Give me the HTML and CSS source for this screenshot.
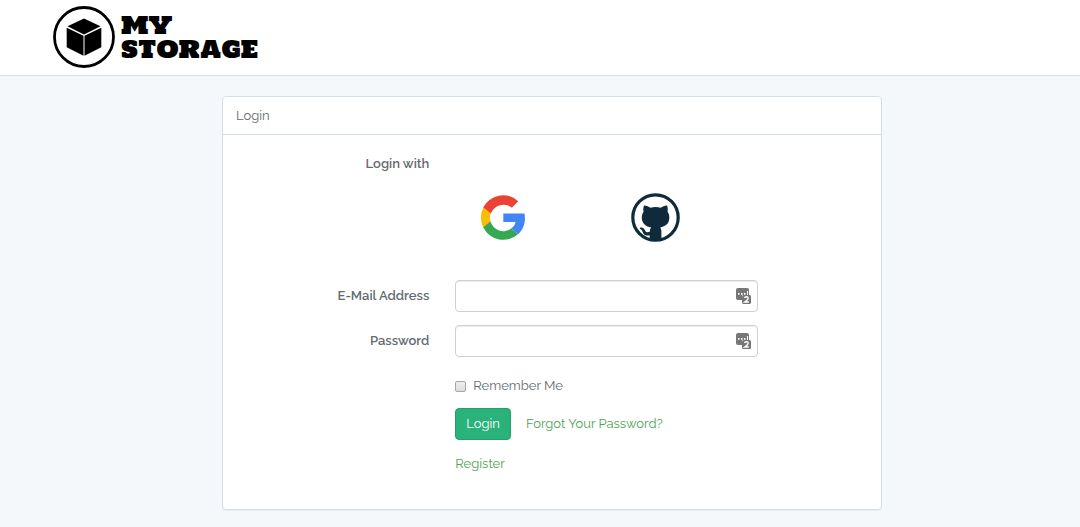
FILE: index.html
```html
<!DOCTYPE html>
<html lang="en">
<head>
<meta charset="utf-8">
<meta name="viewport" content="width=device-width, initial-scale=1">
<title>My Storage - Login</title>
<link rel="stylesheet" href="styles.css">
</head>
<body>
<header class="navbar">
  <a class="brand" href="#">
    <svg class="brand-mark" viewBox="0 0 62 62" aria-hidden="true">
      <circle cx="31" cy="31" r="29.5" fill="#fff" stroke="#000" stroke-width="2.8"/>
      <path d="M31 12.5 47.5 20.3 31 28.4 14.5 20.3Z"/>
      <path d="M13.7 21.8 30.5 29.8V49.7L13.7 41.2Z"/>
      <path d="M48.3 21.8 31.5 29.8V49.7L48.3 41.2Z"/>
    </svg>
    <span class="brand-name">MY<br>STORAGE</span>
  </a>
</header>
<main class="content">
<section class="panel">
  <h1 class="panel-heading">Login</h1>
  <form class="panel-body">
    <div class="row">
      <span class="label">Login with</span>
    </div>
    <div class="row social-row">
      <div class="field social">
        <a href="#" aria-label="Google">
          <svg class="social-icon" viewBox="0 0 49 49">
            <path fill="#ea4335" d="M3.7 15.5A22.2 22.2 0 0 1 39.3 8.3L32.8 14.7A13.3 13.3 0 0 0 11.8 20.8Z"/>
            <path fill="#fbbc05" d="M4.5 14.2A22.2 22.2 0 0 0 4.5 34.8L11.7 29.1A13.5 13.5 0 0 1 11.7 20.2Z"/>
            <path fill="#34a853" d="M4.2 34.3A22.3 22.3 0 0 0 39.2 41.1L32.1 35.5A13.2 13.2 0 0 1 11.5 28.6Z"/>
            <path fill="#4285f4" d="M24.3 20.4H45.5C47.1 29 44.4 36.7 39.2 41.1L32.1 35.5C34.5 34 36 31.8 36.6 29.1H24.3Z"/>
          </svg>
        </a>
        <a href="#" aria-label="GitHub">
          <svg class="social-icon" viewBox="0 0 49 49">
            <circle cx="24.5" cy="24.5" r="22.7" fill="#fff" stroke="#0f2a3a" stroke-width="3.2"/>
            <path fill="#0f2a3a" d="M13 12.4C15.4 12.3 17.8 13.4 19.4 14.7C22.8 13.9 26.3 13.9 29.7 14.7C31.5 13.3 33.8 12.3 36 12.4C37 14.7 36.9 16.9 36.5 18.7C38 20.6 38.5 22.7 38.3 25C38 31.1 34.5 33.4 29.1 34.4C30 35.5 30.4 36.7 30.4 38.2V47H18.7V42.4C14.7 43 12.8 41.9 11.8 39.2C11.2 37.4 10.3 36.3 8.8 35.7C8.6 34.7 9.6 34.3 10.8 34.6C12.6 35.1 13.4 36.4 14.2 37.7C15.2 39.3 16.8 39.6 18.8 38.7C18.9 36.8 19.3 35.4 20.2 34.4C14.8 33.5 11.1 31 10.8 25C10.7 22.7 11.2 20.6 12.6 18.8C12.1 16.8 12.1 14.6 13 12.4Z"/>
          </svg>
        </a>
      </div>
    </div>
    <div class="row">
      <label class="label" for="email">E-Mail Address</label>
      <div class="field input-wrap">
        <input class="input" id="email" type="email">
        <svg class="key-icon" viewBox="0 0 15 17" aria-hidden="true">
          <path fill="#777" d="M2 0H11Q13 0 13 2V7H6V12H2Q0 12 0 10V2Q0 0 2 0Z"/>
          <path fill="#fff" d="M2 5h1.5v1.7H2zM5 5h1.5v1.7H5zM8 5h1.5v1.7H8zM11 3h1v4h-1z"/>
          <rect x="6" y="7" width="9" height="9" rx="1.5" fill="#777"/>
          <path fill="none" stroke="#fff" stroke-width="1.4" d="M8.3 9.7Q10.3 8.1 12 9.3Q13 10.8 8.7 14H12.8"/>
        </svg>
      </div>
    </div>
    <div class="row">
      <label class="label" for="password">Password</label>
      <div class="field input-wrap">
        <input class="input" id="password" type="password">
        <svg class="key-icon" viewBox="0 0 15 17" aria-hidden="true">
          <path fill="#777" d="M2 0H11Q13 0 13 2V7H6V12H2Q0 12 0 10V2Q0 0 2 0Z"/>
          <path fill="#fff" d="M2 5h1.5v1.7H2zM5 5h1.5v1.7H5zM8 5h1.5v1.7H8zM11 3h1v4h-1z"/>
          <rect x="6" y="7" width="9" height="9" rx="1.5" fill="#777"/>
          <path fill="none" stroke="#fff" stroke-width="1.4" d="M8.3 9.7Q10.3 8.1 12 9.3Q13 10.8 8.7 14H12.8"/>
        </svg>
      </div>
    </div>
    <div class="row remember-row">
      <div class="field remember">
        <input class="checkbox" id="remember" type="checkbox">
        <label for="remember">Remember Me</label>
      </div>
    </div>
    <div class="row">
      <div class="field actions">
        <button class="button" type="submit">Login</button>
        <a class="link" href="#">Forgot Your Password?</a>
      </div>
    </div>
    <div class="row">
      <div class="field"><a class="link" href="#">Register</a></div>
    </div>
  </form>
</section>
</main>
</body>
</html>
```
FILE: styles.css
```css
* { box-sizing: border-box; }

body {
  margin: 0;
  background: #f5f8fa;
  color: #636b6f;
  font-family: Raleway, Lato, sans-serif;
  font-size: 13px;
  line-height: 22px;
}

.navbar {
  background: #fff;
  border-bottom: 1px solid #d3e0e9;
  padding: 6px 53px 7px;
}

.brand {
  display: inline-flex;
  align-items: center;
  gap: 6px;
  color: #000;
  text-decoration: none;
  vertical-align: top;
}

.brand-mark { width: 62px; height: 62px; }

.brand-name {
  font-family: "Goudy Stout", "Holtwood One SC", Ultra, "DejaVu Serif", serif;
  font-size: 24px;
  font-weight: 400;
  line-height: 24px;
}

.content { padding: 20px 0 17px 24px; }

.panel {
  max-width: 660px;
  margin: 0 auto;
  background: #fff;
  border: 1px solid #d3e0e9;
  border-radius: 4px;
  box-shadow: 0 1px 1px rgba(0, 0, 0, 0.05);
}

.panel-heading {
  margin: 0;
  padding: 8px 13px 7px;
  border-bottom: 1px solid #d3e0e9;
  font-size: 13px;
  font-weight: 400;
}

.panel-body { padding: 13px 0 21px; }

.row {
  display: grid;
  grid-template-columns: 4fr 6fr 2fr;
  margin-bottom: 13px;
}

.label {
  padding: 5px 13px;
  text-align: right;
  font-weight: 600;
}

.field {
  grid-column: 2;
  margin: 0 13px;
}

.social-row { margin-bottom: 38px; }

.social {
  display: grid;
  grid-template-columns: 1fr 1fr;
}

.social a { padding-left: 24px; }

.social-icon {
  display: block;
  width: 49px;
  height: 49px;
}

.input-wrap { position: relative; }

.input {
  display: block;
  width: 100%;
  height: 32px;
  padding: 4px 30px 4px 11px;
  border: 1px solid #ccd0d2;
  border-radius: 4px;
  background: #fff;
  box-shadow: inset 0 1px 1px rgba(0, 0, 0, 0.075);
  color: #555;
  font: inherit;
}

.key-icon {
  position: absolute;
  top: 8px;
  right: 7px;
  width: 15px;
  height: 17px;
}

.remember-row { margin-bottom: 11px; }

.remember {
  display: flex;
  align-items: center;
  gap: 7px;
  padding-top: 5px;
}

.checkbox {
  appearance: none;
  width: 11px;
  height: 11px;
  margin: 0;
  border: 1px solid #a5a5a5;
  border-radius: 2px;
  background: linear-gradient(#eee, #ddd);
}

.checkbox:checked { background: #2ab27b; }

.actions {
  display: flex;
  align-items: center;
  gap: 15px;
}

.button {
  height: 32px;
  padding: 0 10px;
  border: 1px solid #259d6d;
  border-radius: 4px;
  background: #2ab27b;
  color: #fff;
  font: inherit;
}

.link {
  color: #4fa553;
  text-decoration: none;
}
```
